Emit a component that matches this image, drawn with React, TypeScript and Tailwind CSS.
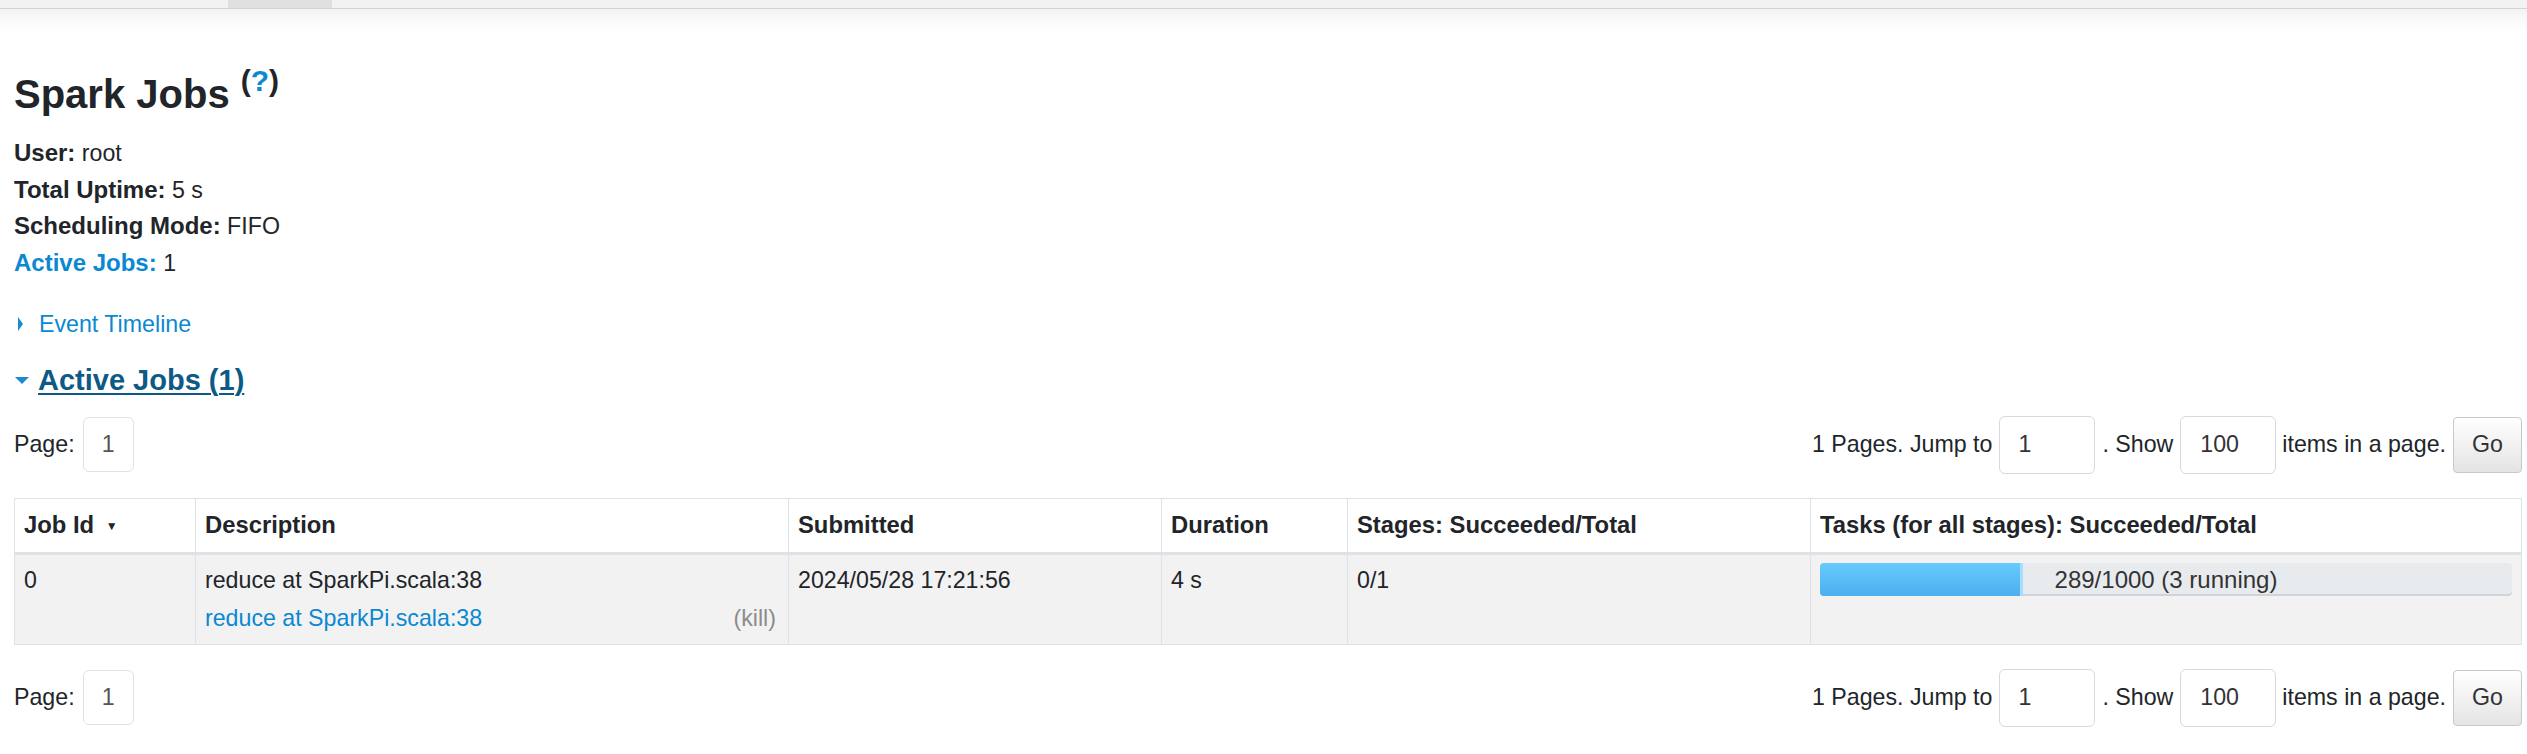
import React from "react";

const font = "font-['Liberation_Sans',Arial,sans-serif]";

const Pagination = () => (
  <div className="flex h-[58px] items-center justify-between">
    <div className="flex items-center gap-[8px]">
      <span>Page:</span>
      <span className="flex h-[55px] w-[51px] items-center justify-center rounded-[6px] border border-[#dee2e6] text-[#555]">
        1
      </span>
    </div>
    <div className="flex items-center">
      <span className="mr-[7px]">1 Pages. Jump to</span>
      <input
        readOnly
        value="1"
        className="h-[58px] w-[96px] rounded-[6px] border border-[#d6d9dd] bg-white pl-[18px] text-[#333] outline-none"
      />
      <span className="mx-[7px]">. Show</span>
      <input
        readOnly
        value="100"
        className="h-[58px] w-[96px] rounded-[6px] border border-[#d6d9dd] bg-white pl-[19px] text-[#333] outline-none"
      />
      <span className="ml-[6px] mr-[7px]">items in a page.</span>
      <button className="h-[56px] w-[69px] rounded-[4px] border border-[#c8c8c8] bg-gradient-to-b from-white to-[#e4e4e4] text-[#333]">
        Go
      </button>
    </div>
  </div>
);

const th = "border border-[#dee2e6] border-b-[3px] px-[9px] pt-[7px] pb-[7px] text-left text-[23.8px] font-bold leading-[37px] align-top";
const td = "border border-[#dee2e6] px-[9px] pt-[6px] pb-[7px] leading-[38px] align-top";

export default function App() {
  return (
    <div className={`${font} min-h-screen bg-white text-[23.2px] text-[#212529]`}>
      {/* top nav strip */}
      <div className="flex h-[9px] border-b border-[#d4d4d4] bg-[#f2f2f2]">
        <div className="ml-[228px] w-[104px] bg-[#e0e0e0]" />
      </div>
      <div className="h-[22px] bg-gradient-to-b from-[#f3f3f3] to-white" />

      <div className="pl-[14px] pr-[5px]">
        <h3 className="mt-[39px] text-[40px] font-bold leading-[48px] text-[#212529]">
          Spark Jobs{" "}
          <sup className="relative -top-[17px] align-baseline text-[30px] leading-none">
            (<a className="text-[#0a88d2]">?</a>)
          </sup>
        </h3>

        <ul className="mt-[17px] leading-[36.7px]">
          <li>
            <strong className="text-[24px]">User:</strong> root
          </li>
          <li>
            <strong className="text-[24px]">Total Uptime:</strong> 5 s
          </li>
          <li>
            <strong className="text-[24px]">Scheduling Mode:</strong> FIFO
          </li>
          <li>
            <a className="text-[24px] font-bold text-[#0a88d2]">Active Jobs:</a> 1
          </li>
        </ul>

        <div className="mt-[24px] flex items-center leading-[36.7px] text-[#0a88d2]">
          <span className="ml-[4px] mr-[16px] h-0 w-0 border-y-[7px] border-l-[5px] border-y-transparent border-l-[#1b8ad3]" />
          <span>Event Timeline</span>
        </div>

        <h4 className="mt-[19px] flex items-center text-[29px] font-bold leading-[36px]">
          <span className="ml-[1px] mr-[9px] mt-[2px] h-0 w-0 border-x-[7px] border-t-[7px] border-x-transparent border-t-[#1b8ad3]" />
          <a className="text-[#0d5a87] underline decoration-2 underline-offset-[3px]">Active Jobs (1)</a>
        </h4>

        <div className="mt-[18px]">
          <Pagination />
        </div>

        <table className="mt-[24px] w-full table-fixed border-collapse border border-[#dee2e6]">
          <colgroup>
            <col className="w-[181px]" />
            <col className="w-[593px]" />
            <col className="w-[373px]" />
            <col className="w-[186px]" />
            <col className="w-[463px]" />
            <col />
          </colgroup>
          <thead>
            <tr className="bg-white">
              <th className={th}>
                Job Id <span className="ml-[5px] text-[12px] align-middle">▼</span>
              </th>
              <th className={th}>Description</th>
              <th className={th}>Submitted</th>
              <th className={th}>Duration</th>
              <th className={th}>Stages: Succeeded/Total</th>
              <th className={th}>Tasks (for all stages): Succeeded/Total</th>
            </tr>
          </thead>
          <tbody>
            <tr className="h-[89px] bg-[#f2f2f2]">
              <td className={td}>0</td>
              <td className={td}>
                <div>reduce at SparkPi.scala:38</div>
                <div className="flex justify-between">
                  <a className="text-[#0a88d2]">reduce at SparkPi.scala:38</a>
                  <span className="mr-[3px] text-[#8c8c8c]">(kill)</span>
                </div>
              </td>
              <td className={td}>2024/05/28 17:21:56</td>
              <td className={td}>4 s</td>
              <td className={td}>0/1</td>
              <td className={td}>
                <div className="relative mt-[2px] flex h-[33px] overflow-hidden rounded-[4px] bg-[#e8ebee] shadow-[inset_0_-2px_0_#d0d4d8]">
                  <div className="h-full w-[28.9%] bg-gradient-to-b from-[#66cbfc] to-[#4eaeee]" />
                  <div className="h-full w-[3px] bg-[#a6defc]" />
                  <span className="absolute inset-0 text-center text-[24px] leading-[33px] text-[#333]">
                    289/1000 (3 running)
                  </span>
                </div>
              </td>
            </tr>
          </tbody>
        </table>

        <div className="mt-[24px]">
          <Pagination />
        </div>
      </div>
    </div>
  );
}
